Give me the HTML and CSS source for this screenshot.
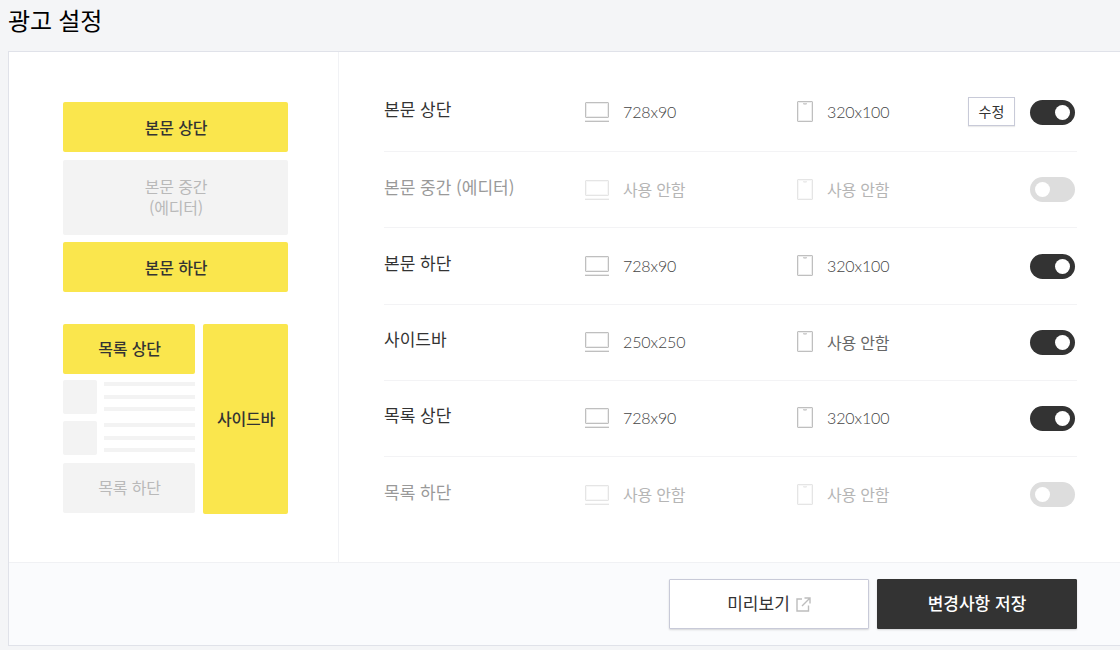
FILE: index.html
```html
<!DOCTYPE html>
<html lang="ko">
<head>
  <meta charset="UTF-8" />
  <meta name="viewport" content="width=device-width, initial-scale=1" />
  <title>광고 설정</title>
  <link rel="stylesheet" href="styles.css">
</head>
<body>

  <svg class="sprite" width="0" height="0">
    <symbol id="pc" viewBox="0 0 24 20">
      <rect x="1.5" y="1.5" width="21" height="13" fill="none" stroke="#ededed" />
      <rect x=".5" y=".5" width="23" height="15" rx=".5" fill="none" stroke="#bfbfbf" />
      <path d="M0 18.5h24" stroke="#e9e9e9" />
      <path d="M0 19.5h24" stroke="#bfbfbf" />
    </symbol>
    <symbol id="mobile" viewBox="0 0 16 21">
      <rect x="1.5" y="1.5" width="13" height="18" fill="none" stroke="#ededed" />
      <rect x=".5" y=".5" width="15" height="20" rx=".5" fill="none" stroke="#bfbfbf" />
      <path d="M6 2.5h4" stroke="#d0d0d0" />
      <path d="M6.5 3.5h3" stroke="#ddd" />
    </symbol>
  </svg>

  <h1>광고 설정</h1>

  <form class="card">
    <div class="content">
      <div class="preview">
        <div class="block on">본문 상단</div>
        <div class="block middle">본문 중간<br />(에디터)</div>
        <div class="block on">본문 하단</div>
        <div class="lower">
          <div class="list">
            <div class="block on">목록 상단</div>
            <div class="post"><i class="thumb"></i><div class="lines"><i></i><i></i><i></i></div></div>
            <div class="post"><i class="thumb"></i><div class="lines"><i></i><i></i><i></i></div></div>
            <div class="block">목록 하단</div>
          </div>
          <div class="block on side">사이드바</div>
        </div>
      </div>

      <ul class="settings">
        <li class="row">
          <strong>본문 상단</strong>
          <span class="size pc"><svg width="24" height="20"><use href="#pc" /></svg>728x90</span>
          <span class="size mobile"><svg width="16" height="21"><use href="#mobile" /></svg>320x100</span>
          <button type="button" class="edit">수정</button>
          <span class="toggle on"></span>
        </li>
        <li class="row off">
          <strong>본문 중간 (에디터)</strong>
          <span class="size pc none"><svg width="24" height="20"><use href="#pc" /></svg>사용 안함</span>
          <span class="size mobile none"><svg width="16" height="21"><use href="#mobile" /></svg>사용 안함</span>
          <span class="toggle"></span>
        </li>
        <li class="row tall">
          <strong>본문 하단</strong>
          <span class="size pc"><svg width="24" height="20"><use href="#pc" /></svg>728x90</span>
          <span class="size mobile"><svg width="16" height="21"><use href="#mobile" /></svg>320x100</span>
          <span class="toggle on"></span>
        </li>
        <li class="row">
          <strong>사이드바</strong>
          <span class="size pc"><svg width="24" height="20"><use href="#pc" /></svg>250x250</span>
          <span class="size mobile none"><svg width="16" height="21"><use href="#mobile" /></svg>사용 안함</span>
          <span class="toggle on"></span>
        </li>
        <li class="row">
          <strong>목록 상단</strong>
          <span class="size pc"><svg width="24" height="20"><use href="#pc" /></svg>728x90</span>
          <span class="size mobile"><svg width="16" height="21"><use href="#mobile" /></svg>320x100</span>
          <span class="toggle on"></span>
        </li>
        <li class="row off">
          <strong>목록 하단</strong>
          <span class="size pc none"><svg width="24" height="20"><use href="#pc" /></svg>사용 안함</span>
          <span class="size mobile none"><svg width="16" height="21"><use href="#mobile" /></svg>사용 안함</span>
          <span class="toggle"></span>
        </li>
      </ul>
    </div>

    <div class="actions">
      <button type="button" class="btn">미리보기
        <svg width="15" height="15" viewBox="0 0 15 15" fill="none" stroke="#bdbdbd" stroke-width="1.4">
          <path d="M6 2H1v12h11.5V8.5M8.5 1H14v5.5M13.5 1.5L6 9" />
        </svg>
      </button>
      <button type="button" class="btn save">변경사항 저장</button>
    </div>
  </form>

</body>
</html>
```
FILE: styles.css
```css
* {
  box-sizing: border-box;
}

body {
  margin: 0;
  padding: 0 0 0 8px;
  height: 650px;
  overflow: hidden;
  background: #f4f5f7;
  color: #333;
  font-family: "Noto Sans CJK KR", sans-serif;
}

.sprite {
  display: block;
}

h1 {
  margin: 0;
  height: 51px;
  line-height: 39px;
  font-size: 24px;
  font-weight: 400;
  letter-spacing: -.2px;
  color: #000;
}

.card {
  width: 1120px;
  border: 1px solid #e0e2e9;
  background: #fff;
}

.content {
  display: flex;
  height: 510px;
}

.preview {
  width: 330px;
  padding: 50px 50px 0 54px;
  border-right: 1px solid #f1f2f5;
}

.block {
  display: flex;
  align-items: center;
  justify-content: center;
  width: 100%;
  height: 50px;
  padding-left: 1px;
  border-radius: 2px;
  background: #f3f3f3;
  color: #b9b9b9;
  font-size: 16px;
  letter-spacing: -.2px;
  line-height: 21px;
  text-align: center;
}

.block.on {
  background: #fae64d;
  color: #333;
  font-weight: 500;
}

.block.middle {
  height: 75px;
  margin: 7.5px 0;
}

.lower {
  display: flex;
  gap: 8px;
  margin-top: 31.5px;
}

.list {
  width: 132px;
}

.side {
  width: 85px;
  height: 190px;
}

.post {
  display: flex;
  gap: 7px;
  margin: 6.5px 0 7.3px;
}

.thumb {
  width: 34px;
  height: 34px;
  border-radius: 2px;
  background: #f3f3f3;
}

.lines {
  display: flex;
  flex-direction: column;
  gap: 8.5px;
  width: 92px;
  padding-top: 2px;
}

.lines i {
  height: 4px;
  background: #f3f3f3;
}

.settings {
  width: 693px;
  margin: 0 0 0 45px;
  padding: 22px 0 0;
  list-style: none;
}

.row {
  display: flex;
  align-items: flex-start;
  height: 76px;
  padding-top: 25px;
  border-bottom: 1px solid #f3f3f5;
}

.row:first-child {
  height: 78px;
  padding-top: 26px;
}

.row.tall {
  height: 77px;
  padding-top: 26px;
}

.row:last-child {
  border-bottom: 0;
}

.row strong {
  width: 201px;
  margin-top: -4px;
  font-size: 17px;
  font-weight: 400;
  line-height: 25px;
}

.size {
  display: flex;
  align-items: flex-start;
  font-family: Lato, "Noto Sans CJK KR", sans-serif;
  font-size: 16px;
  font-weight: 300;
  letter-spacing: -.1px;
  line-height: 23px;
  color: #444;
}

.size.none {
  font-weight: 400;
  line-height: 25px;
  color: #666;
}

.size svg {
  margin-top: 2px;
}

.size.pc {
  gap: 14px;
  width: 212px;
}

.size.mobile {
  gap: 14px;
}

.size.mobile svg {
  margin-top: 1px;
}

.off strong {
  margin-top: -3px;
  color: #999;
}

.off .size.none {
  color: #b5b5b5;
}

.off .size svg {
  margin-top: 3px;
  opacity: .4;
}

.off .size.mobile svg {
  margin-top: 2px;
}

.edit {
  width: 47px;
  height: 29px;
  margin: -3px 15px 0 auto;
  padding: 0;
  border: 1px solid #c8cad8;
  background: #fff;
  box-shadow: 0 1px 1px rgba(0, 0, 0, .08);
  color: #333;
  font-family: inherit;
  font-size: 14px;
  line-height: 27px;
}

.toggle {
  width: 45px;
  height: 25px;
  margin: 0 2px 0 auto;
  padding: 5px;
  border-radius: 13px;
  background: #ddd;
}

.edit + .toggle {
  margin-left: 0;
}

.toggle::before {
  content: "";
  display: block;
  width: 15px;
  height: 15px;
  border-radius: 50%;
  background: #fff;
}

.toggle.on {
  background: #333;
}

.toggle.on::before {
  margin-left: 20px;
}

.actions {
  display: flex;
  gap: 8px;
  height: 83px;
  padding: 16px 0 0 660px;
  border-top: 1px solid #f0f1f4;
  background: #fafbfd;
}

.btn {
  display: flex;
  align-items: center;
  justify-content: center;
  gap: 6px;
  width: 200px;
  height: 50px;
  padding: 0 0 4px;
  border: 1px solid #c8cad8;
  border-radius: 1px;
  background: #fff;
  box-shadow: 0 1px 2px rgba(0, 0, 0, .15);
  color: #333;
  font-family: inherit;
  font-size: 17px;
}

.btn svg {
  margin-top: 4px;
}

.btn.save {
  border-color: #333;
  background: #333;
  color: #fff;
  font-weight: 500;
}
```
